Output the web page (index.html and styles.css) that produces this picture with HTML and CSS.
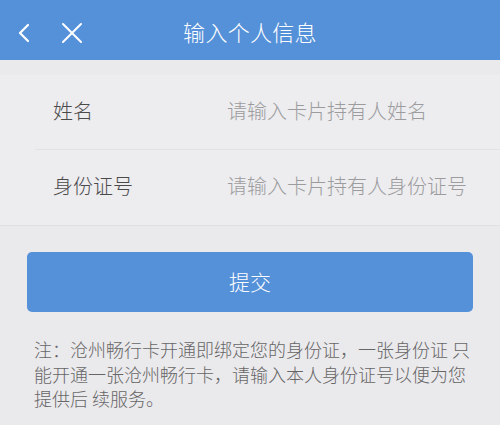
FILE: index.html
```html
<!DOCTYPE html>
<html lang="zh-CN">
<head>
<meta charset="utf-8">
<title>输入个人信息</title>
<link rel="stylesheet" href="styles.css">
</head>
<body>
<header class="topbar">
  <div class="nav-icons">
    <svg class="icon-back" width="14" height="20" viewBox="0 0 14 20"><path d="M11 2 L3 10 L11 18" fill="none" stroke="#fff" stroke-width="2.2" stroke-linecap="round" stroke-linejoin="round"/></svg>
    <svg class="icon-close" width="24" height="24" viewBox="0 0 24 24"><path d="M3 3 L21 21 M21 3 L3 21" fill="none" stroke="#fff" stroke-width="2" stroke-linecap="round"/></svg>
  </div>
  <h1 class="title">输入个人信息</h1>
</header>
<main>
  <section class="form">
    <div class="row row-first">
      <span class="label">姓名</span>
      <span class="placeholder">请输入卡片持有人姓名</span>
    </div>
    <div class="row">
      <span class="label">身份证号</span>
      <span class="placeholder">请输入卡片持有人身份证号</span>
    </div>
  </section>
  <button class="submit">提交</button>
  <p class="note">注：沧州畅行卡开通即绑定您的身份证，一张身份证 只能开通一张沧州畅行卡，请输入本人身份证号以便为您提供后 续服务。</p>
</main>
</body>
</html>
```

FILE: styles.css
```css
* { box-sizing: border-box; }
html, body {
  margin: 0;
  padding: 0;
}
body {
  width: 500px;
  height: 425px;
  overflow: hidden;
  background: #eae9ec;
  font-family: "Noto Sans CJK SC", "Noto Sans", sans-serif;
  font-weight: 300;
}
.topbar {
  position: relative;
  height: 60px;
  background: #5591d9;
  display: flex;
  align-items: center;
  justify-content: center;
}
.nav-icons {
  position: absolute;
  left: 17px;
  top: 21px;
  display: flex;
  align-items: center;
  gap: 29px;
}
.icon-back { display: block; }
.icon-close { display: block; }
.title {
  margin: 0;
  color: #fff;
  font-size: 22px;
  font-weight: 300;
  line-height: 28px;
  padding-top: 2px;
  letter-spacing: 0.3px;
}
.form {
  margin-top: 15px;
  background: #edecef;
  border-bottom: 1px solid #e0dfe2;
}
.row {
  height: 75px;
  display: flex;
  align-items: center;
  padding-left: 53px;
  padding-bottom: 4px;
}
.row-first {
  border-bottom: 1px solid #e2e1e4;
  margin-left: 35px;
  padding-left: 18px;
}
.label {
  width: 174px;
  color: #4a4a4a;
  font-size: 20px;
}
.placeholder {
  color: #9c9c9e;
  font-size: 20px;
}
.submit {
  display: flex;
  align-items: center;
  justify-content: center;
  margin: 26px 27px 0;
  width: 446px;
  height: 60px;
  border: none;
  border-radius: 5px;
  background: #5591d9;
  color: #fff;
  font-family: inherit;
  font-weight: 300;
  font-size: 21px;
  padding: 0 0 2px;
}
.note {
  margin: 25px 0 0 34px;
  width: 440px;
  color: #666;
  font-size: 18px;
  line-height: 24.5px;
}
```
